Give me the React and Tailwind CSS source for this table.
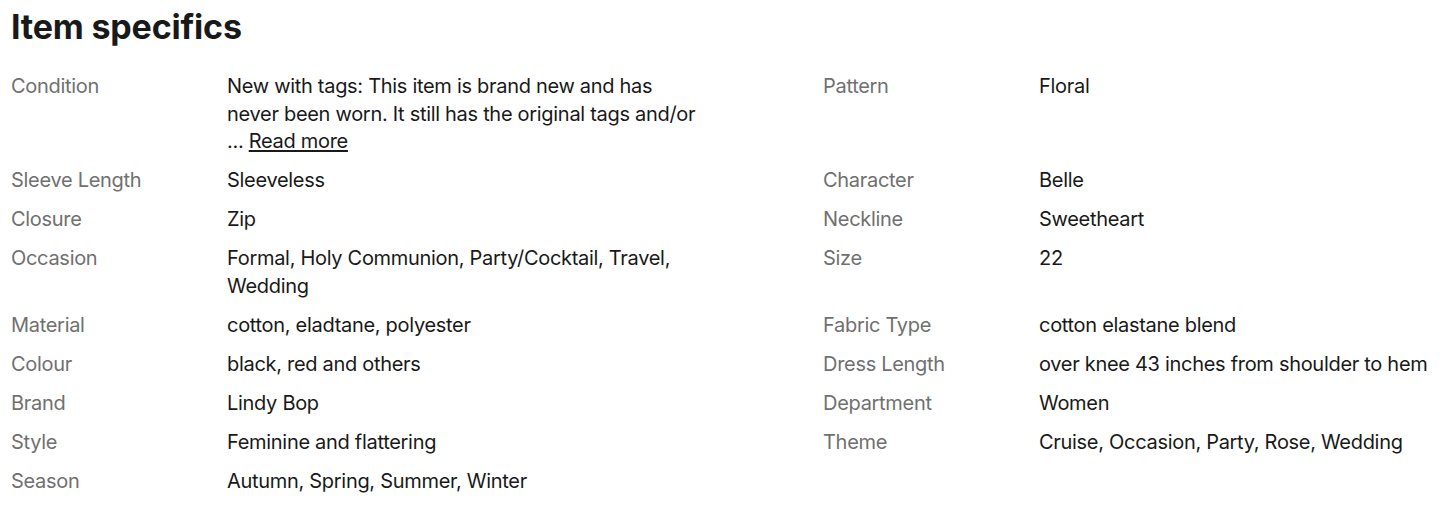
export default function App() {
  const rows = [
    [
      ["Condition", <>New with tags: This item is brand new and has never been worn. It still has the original tags and/or <br />... <span className="underline underline-offset-2">Read more</span></>],
      ["Pattern", "Floral"],
    ],
    [["Sleeve Length", "Sleeveless"], ["Character", "Belle"]],
    [["Closure", "Zip"], ["Neckline", "Sweetheart"]],
    [["Occasion", "Formal, Holy Communion, Party/Cocktail, Travel, Wedding"], ["Size", "22"]],
    [["Material", "cotton, eladtane, polyester"], ["Fabric Type", "cotton elastane blend"]],
    [["Colour", "black, red and others"], ["Dress Length", "over knee 43 inches from shoulder to hem"]],
    [["Brand", "Lindy Bop"], ["Department", "Women"]],
    [["Style", "Feminine and flattering"], ["Theme", "Cruise, Occasion, Party, Rose, Wedding"]],
    [["Season", "Autumn, Spring, Summer, Winter"], null],
  ];
  return (
    <div className="w-[1445px] h-[514px] bg-white overflow-hidden pl-[11px] text-[#191919]" style={{ fontFamily: "Inter, 'Liberation Sans', sans-serif" }}>
      <h2 className="text-[34px] font-bold leading-[44px] pt-[5px] tracking-[-0.2px]">Item specifics</h2>
      <div className="mt-[24px] flex flex-col gap-y-[11.5px] text-[20px] leading-[27.5px] tracking-[-0.3px]">
        {rows.map((r, i) => (
          <div key={i} className="flex">
            {r.map((c, j) => (
              <div key={j} className="flex w-[812px] shrink-0">
                {c && (
                  <>
                    <div className="w-[216px] shrink-0 text-[#707070]">{c[0]}</div>
                    <div className="w-[478px]">{c[1]}</div>
                  </>
                )}
              </div>
            ))}
          </div>
        ))}
      </div>
    </div>
  );
}
